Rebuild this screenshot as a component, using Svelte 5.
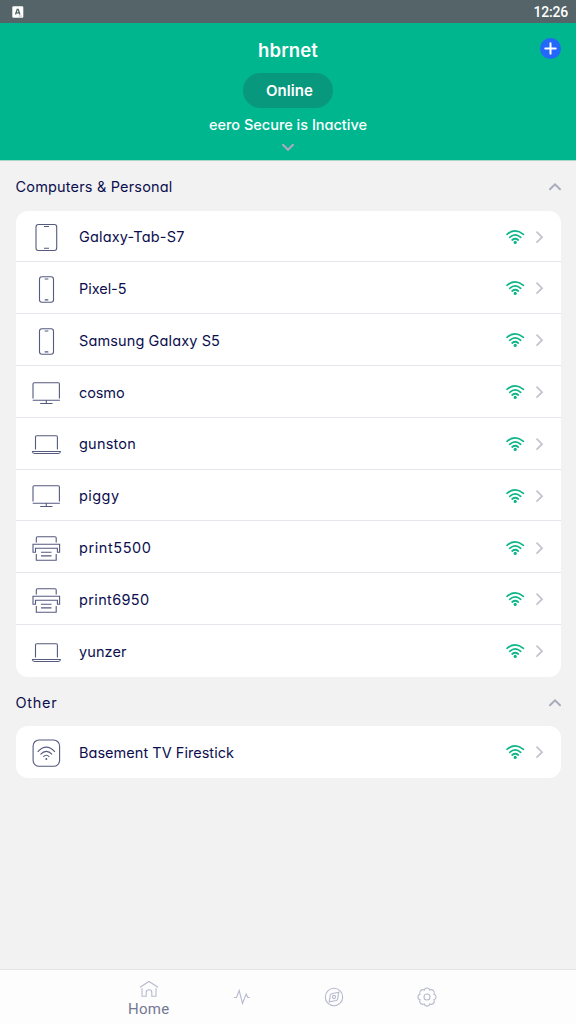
<script>
  const groups = [
    {
      title: 'Computers & Personal',
      width: 157,
      devices: [
        { name: 'Galaxy-Tab-S7', icon: 'tablet', width: 105.5 },
        { name: 'Pixel-5', icon: 'phone', width: 47.5 },
        { name: 'Samsung Galaxy S5', icon: 'phone', width: 141 },
        { name: 'cosmo', icon: 'monitor', width: 45.5 },
        { name: 'gunston', icon: 'laptop', width: 57 },
        { name: 'piggy', icon: 'monitor', width: 40.5 },
        { name: 'print5500', icon: 'printer', width: 72.5 },
        { name: 'print6950', icon: 'printer', width: 70.5 },
        { name: 'yunzer', icon: 'laptop', width: 47.5 }
      ]
    },
    {
      title: 'Other',
      width: 42,
      devices: [{ name: 'Basement TV Firestick', icon: 'wireless', width: 155 }]
    }
  ];

  // Tracks a label out or in so that it takes the given width.
  function fit(node, width) {
    const natural = node.getBoundingClientRect().width;
    node.style.letterSpacing = `${(width - natural) / node.textContent.length}px`;
  }
</script>

{#snippet wifi()}
  <svg class="wifi" width="20" height="16" viewBox="0 0 20 16">
    <path d="M2 5.300Q10.200-1.500 18.400 5.300M4.700 8.300Q10.200 3.500 15.700 8.300M7.200 11Q10.200 8.500 13.200 11" />
    <circle cx="10.200" cy="13.400" r="1.600" />
  </svg>
{/snippet}

{#snippet deviceIcon(kind)}
  <svg class="device" width="30" height="30" viewBox="0 0 30 30">
    {#if kind === 'tablet'}
      <rect x="5" y="2.500" width="20.700" height="26" rx="2.400" />
      <path d="M13 4.500h5M13 26.300h5" />
    {:else if kind === 'phone'}
      <rect x="8.500" y="2.800" width="14" height="25.400" rx="2.400" />
      <path d="M13.700 5h3.600M13.700 25.900h3.600" />
    {:else if kind === 'monitor'}
      <path d="M2 20.500V6q0-1.200 1.200-1.200H27.200q1.200 0 1.200 1.200V20.500M1.700 22.300h27.200M15.300 22.300v3M9.200 25.500h12.300" />
    {:else if kind === 'laptop'}
      <path d="M4.500 20.600V8q0-1.200 1.200-1.200h19.500q1.200 0 1.200 1.200V20.600" />
      <path d="M1.400 22.500h28q-.2 2-2 2h-24q-1.800 0-2-2Z" />
    {:else if kind === 'printer'}
      <path d="M5.300 9.500V5q0-1.200 1.200-1.200H24q1.200 0 1.200 1.200v4.500" />
      <path d="M4 19.200H2V11.300H28.600V19.200H26.400V15.200H4.500V19.200Z" />
      <path d="M5.300 21V27.200H25.200V21M10 19.200h10.500M10 22.900h10.500" />
    {:else}
      <rect x="2.100" y="2" width="26.500" height="26.300" rx="6" />
      <path d="M6.700 13.800Q15.300 4.500 23.900 13.800M9.500 16.400Q15.300 10.400 21.100 16.400M12.300 18.800Q15.300 15.600 18.300 18.800" />
      <circle class="dot" cx="15.300" cy="20.900" r="1" />
    {/if}
  </svg>
{/snippet}

<div class="screen">
  <div class="status">
    <svg width="12" height="12" viewBox="0 0 12 12">
      <rect x="0.3" y="0.2" width="11" height="11.500" rx="1.2" fill="#fff" />
      <path d="M3.500 8.500L5.200 3.300h1L7.900 8.500M4.200 6.800h3" fill="none" stroke="#526367" stroke-width="1.3" />
      <path d="M6.500 9.300h3.500v1.500h-3.500z" fill="#d3d7d8" />
    </svg>
    <span class="clock" use:fit={34.5}>12:26</span>
  </div>

  <header>
    <h1><span use:fit={60}>hbrnet</span></h1>
    <div class="pill"><span use:fit={47}>Online</span></div>
    <p><span use:fit={158}>eero Secure is Inactive</span></p>
    <svg class="down" width="14" height="9" viewBox="0 0 14 9"><path d="M2 1.800L7 6.800l5-5" /></svg>
    <button aria-label="Add">
      <svg width="21" height="21" viewBox="0 0 21 21">
        <circle cx="10.500" cy="10.500" r="10.500" fill="#2467fb" />
        <path d="M10.500 5.300v10.400M5.300 10.500h10.400" stroke="#fff" stroke-width="2" stroke-linecap="round" />
      </svg>
    </button>
  </header>

  <main>
    {#each groups as group}
      <section>
        <h2>
          <span use:fit={group.width}>{group.title}</span>
          <svg class="up" width="14" height="9" viewBox="0 0 14 9"><path d="M2 7.300L7 2.300l5 5" /></svg>
        </h2>
        <ul>
          {#each group.devices as device}
            <li>
              {@render deviceIcon(device.icon)}
              <div class="name"><span use:fit={device.width}>{device.name}</span></div>
              {@render wifi()}
              <svg class="next" width="9" height="14" viewBox="0 0 9 14"><path d="M2 2.200L7 7.200l-5 5" /></svg>
            </li>
          {/each}
        </ul>
      </section>
    {/each}
  </main>

  <nav>
    <div class="tab home">
      <svg width="20" height="18" viewBox="0 0 20 18">
        <path d="M1 7.200L10 1.500l9 5.700M3 8.300V16.200h4.200V12.500q0-2.700 2.800-2.700t2.800 2.700v3.700H17V8.300" />
      </svg>
      <span use:fit={41.5}>Home</span>
    </div>
    <div class="tab">
      <svg width="18" height="18" viewBox="0 0 18 18">
        <path d="M1 9.500h2.500L6.200 2.500l3.300 13L13.200 6l1.600 3.500h2" />
      </svg>
    </div>
    <div class="tab">
      <svg width="20" height="20" viewBox="0 0 20 20">
        <circle cx="10" cy="10" r="8.700" />
        <path d="M14.800 5.200L13.600 12.100Q13.300 13.200 12.300 13.500L5.200 14.800 6.300 8.200Q6.600 7 7.600 6.700Z" />
        <circle cx="10" cy="10" r="1.600" />
      </svg>
    </div>
    <div class="tab">
      <svg width="20" height="20" viewBox="0 0 20 20">
        <path d="M7.200 3.100C7.800.2 12.200.2 12.800 3.100C15.300 1.500 18.500 4.700 16.900 7.200C19.800 7.800 19.800 12.200 16.900 12.800C18.500 15.300 15.300 18.500 12.800 16.900C12.200 19.800 7.800 19.800 7.200 16.900C4.700 18.500 1.500 15.300 3.100 12.800C.2 12.200 .2 7.800 3.100 7.200C1.500 4.700 4.700 1.500 7.200 3.100Z" />
        <circle cx="10" cy="10" r="3" />
      </svg>
    </div>
  </nav>
</div>

<style>
  :global(body) {
    margin: 0;
  }
  .screen {
    display: flex;
    flex-direction: column;
    height: 1024px;
    overflow: hidden;
    background: #f2f2f2;
    color: #0c0f4e;
    font-family: Inter, "Liberation Sans", sans-serif;
    font-feature-settings: "cv11";
  }
  svg {
    display: block;
    flex: none;
  }
  span {
    white-space: nowrap;
  }
  .status {
    display: flex;
    align-items: center;
    justify-content: space-between;
    box-sizing: border-box;
    height: 23px;
    padding: 1px 8px 0 12px;
    background: #546469;
    color: #fff;
    font: 500 14px Roboto, sans-serif;
  }
  header {
    position: relative;
    display: flex;
    flex-direction: column;
    align-items: center;
    box-sizing: border-box;
    height: 138px;
    padding-top: 15px;
    border-bottom: 1px solid #a9d8cb;
    background: #00b68f;
    color: #fff;
  }
  h1 {
    margin: 0;
    font-size: 18.5px;
    font-weight: 600;
    line-height: 24px;
  }
  .pill {
    display: flex;
    align-items: center;
    justify-content: center;
    box-sizing: border-box;
    width: 90px;
    height: 35px;
    margin-top: 11px;
    padding-left: 3px;
    border-radius: 18px;
    background: #08987e;
    font-size: 15px;
    font-weight: 600;
  }
  header p {
    margin: 7px 0 0;
    font-size: 14.5px;
    font-weight: 500;
    line-height: 20px;
  }
  .down {
    margin-top: 8px;
  }
  .down path,
  .up path {
    fill: none;
    stroke: #a9abbd;
    stroke-width: 2;
    stroke-linecap: round;
  }
  button {
    position: absolute;
    top: 15px;
    right: 15px;
    padding: 0;
    border: 0;
    background: none;
  }
  main {
    flex: 1;
    padding: 0 15.5px;
  }
  h2 {
    display: flex;
    align-items: center;
    justify-content: space-between;
    box-sizing: border-box;
    height: 49.5px;
    margin: 0;
    padding-top: 1px;
    font-size: 14.5px;
    font-weight: 400;
  }
  .up {
    margin-right: -1px;
  }
  ul {
    margin: 0;
    padding: 0;
    border-radius: 12px;
    background: #fff;
    list-style: none;
  }
  li {
    display: flex;
    align-items: center;
    box-sizing: border-box;
    height: 51.84px;
    padding: 0 17px 0 15.5px;
  }
  li:not(:last-child) {
    padding-top: 1.4px;
    border-bottom: 1px solid #e5e5ec;
  }
  .name {
    flex: 1;
    margin-left: 18px;
    font-size: 14.5px;
  }
  .device {
    margin-top: 1px;
    fill: none;
    stroke: #555a80;
    stroke-width: 1.1;
  }
  .device .dot {
    fill: #555a80;
    stroke: none;
  }
  .wifi path {
    fill: none;
    stroke: #0db588;
    stroke-width: 1.7;
    stroke-linecap: round;
  }
  .wifi circle {
    fill: #0db588;
  }
  .next {
    margin-left: 10px;
  }
  .next path {
    fill: none;
    stroke: #c3c4d0;
    stroke-width: 1.8;
    stroke-linecap: round;
  }
  nav {
    display: grid;
    grid-template-columns: repeat(4, 92.8px);
    justify-content: center;
    box-sizing: border-box;
    height: 55px;
    border-top: 1px solid #e6e6e8;
    background: #fdfdfd;
  }
  .tab {
    display: flex;
    flex-direction: column;
    align-items: center;
    justify-content: center;
    color: #747894;
    font: 400 15px Roboto, sans-serif;
  }
  .home {
    padding-top: 4px;
  }
  .tab span {
    line-height: 18px;
    margin-top: 2px;
  }
  .tab svg {
    fill: none;
    stroke: #b8bacd;
    stroke-width: 1.1;
  }
</style>
